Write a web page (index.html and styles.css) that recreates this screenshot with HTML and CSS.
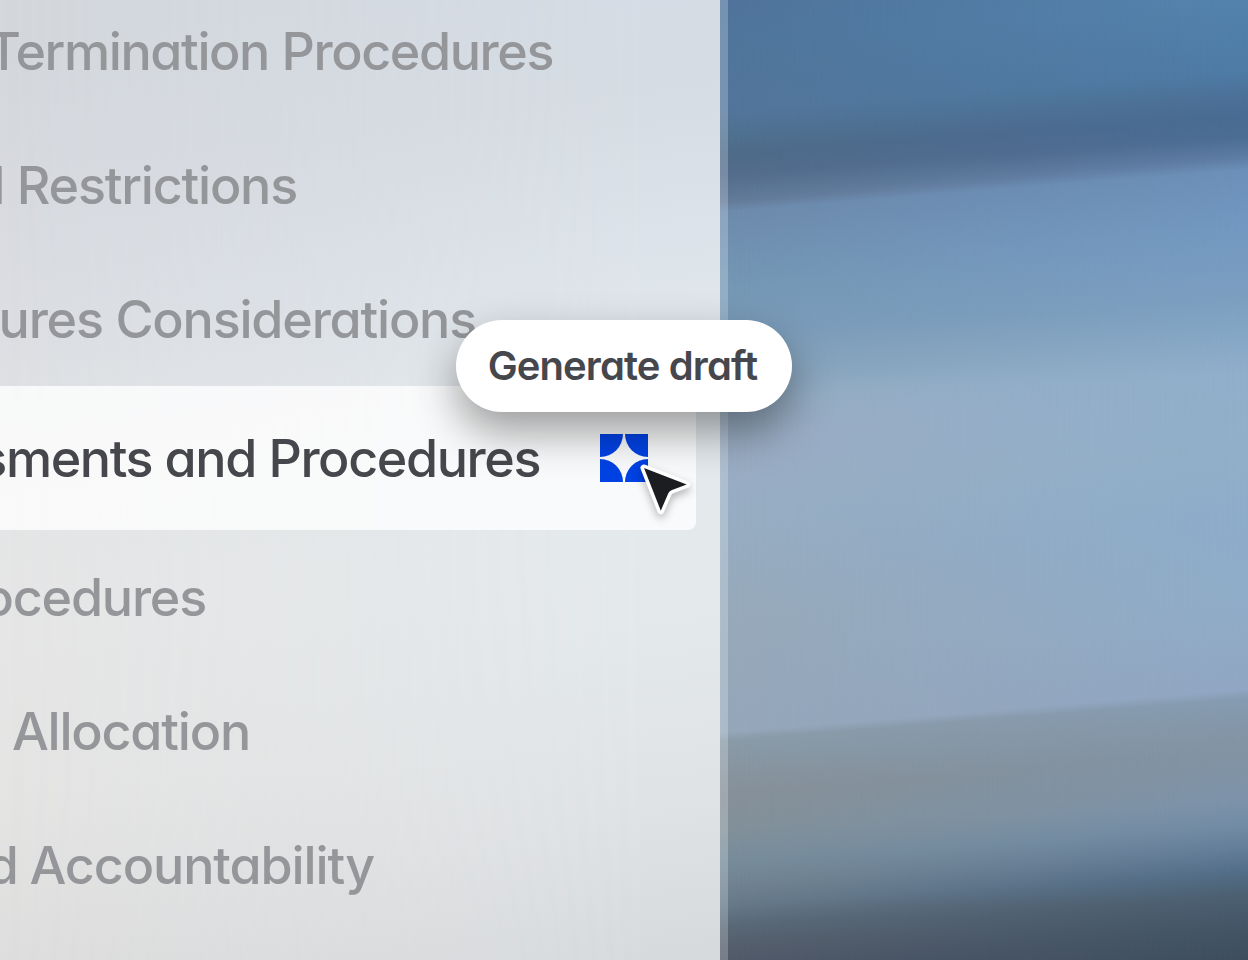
FILE: index.html
```html
<!DOCTYPE html>
<html lang="en">
<head>
    <meta charset="UTF-8">
    <meta name="viewport" content="width=device-width, initial-scale=1.0">
    <title>Generate draft</title>
    <link rel="stylesheet" href="styles.css">
</head>
<body>

    <div class="scene">
        <div class="backdrop">
            <div class="sky"></div>
            <div class="sky sky-right"></div>
        </div>

        <div class="panel">
            <ul class="list">
                <li class="row row-termination"><span>Termination Procedures</span></li>
                <li class="row row-restrictions"><span>d Restrictions</span></li>
                <li class="row row-considerations"><span>ures Considerations</span></li>
                <li class="row row-active">
                    <span>sments and Procedures</span>
                    <svg class="spark" viewBox="0 0 48 48">
                        <path d="M0 0H23A23 23 0 0 1 0 23Z"/>
                        <path d="M48 0V23A23 23 0 0 1 25 0Z"/>
                        <path d="M0 48V25A23 23 0 0 1 23 48Z"/>
                        <path d="M48 48H25A23 23 0 0 1 48 25Z"/>
                    </svg>
                    <div class="tooltip">Generate draft</div>
                    <svg class="cursor" viewBox="0 0 60 60">
                        <path d="M6 6L48.7 22.4L34 28Q31.500 29 30.300 31.300L22.800 48.700Z" fill="#fff" stroke="#fff" stroke-width="7" stroke-linejoin="round"/>
                        <path d="M6 6L48.7 22.4L34 28Q31.500 29 30.300 31.300L22.800 48.700Z" fill="#1c1d20"/>
                    </svg>
                </li>
                <li class="row row-procedures"><span>ocedures</span></li>
                <li class="row row-allocation"><span>Allocation</span></li>
                <li class="row row-accountability"><span>d Accountability</span></li>
            </ul>
        </div>
    </div>

</body>
</html>
```
FILE: styles.css
```css
*,
::after,
::before {
    margin: 0;
    padding: 0;
    box-sizing: border-box;
}

body {
    font-family: Inter, "Liberation Sans", sans-serif;
    font-feature-settings: "cv11";
    overflow: hidden;
}

.scene {
    position: relative;
    width: 1248px;
    height: 960px;
    overflow: hidden;
}

.backdrop {
    position: absolute;
    inset: 0 0 0 720px;
    overflow: hidden;
}

/* the photo is built from two tilted gradients, the second fades in to the right */
.sky {
    position: absolute;
    top: 0;
    left: 0;
    width: 528px;
    height: 1010px;
    transform: skewY(-4.5deg);
    transform-origin: 0 0;
    background: linear-gradient(#50739b 0, #50759c 40px, #53759b 112px, #4f7190 135px, #4f6b89 155px, #546c8c 175px, #5f7896 196px, #657c9b 203px, #6d8bac 212px, #7090b0 242px, #7598b5 290px, #7b9cb9 335px, #8aa5bc 380px, #96adc2 402px, #9badc4 440px, #97adc2 520px, #97a9ba 620px, #95a7ba 733px, #8a9ba8 741px, #869099 795px, #829099 830px, #778c9b 862px, #708290 887px, #667989 906px, #5a6876 927px, #555e6c 948px, #4d5666 975px, #4d5666 1010px);
}

.sky-right {
    background: linear-gradient(#5383ad 0, #5383ad 41px, #4d7ba5 113px, #4c7098 138px, #486b93 158px, #4c6d93 178px, #5d7ca4 198px, #6b8fb8 211px, #7398c1 271px, #7c9fc0 341px, #86a8c6 381px, #90aecb 415px, #91afc8 491px, #8daccb 561px, #90acc8 641px, #90a6c2 731px, #859bb1 740px, #8293a3 791px, #7d93aa 840px, #728ca5 866px, #637d98 890px, #536e88 912px, #4b6072 936px, #445667 965px, #3d4c5c 1005px);
    -webkit-mask-image: linear-gradient(to right, transparent, #000);
    mask-image: linear-gradient(to right, transparent, #000);
}

.panel {
    position: relative;
    width: 728px;
    height: 960px;
    padding-right: 24px;
    border-right: 8px solid rgba(255, 255, 255, 0.22);
    background: linear-gradient(174deg, #d4d7db 40px, #d8dadf 190px, #dcdee2 330px, #e4e5e6 480px, #e6e6e6 620px, #e4e4e3 800px, #dcdcdc 1000px) padding-box;
}

.panel::before {
    content: "";
    position: absolute;
    inset: 0;
    background: linear-gradient(172deg, #d4dce6 50px, #d5dce3 180px, #dce3ea 330px, #e1e7ec 450px, #e4e9ec 600px, #e3e8eb 720px, #e0e3e6 880px, #d7dadd 1040px);
    -webkit-mask-image: linear-gradient(to right, transparent, #000 90%);
    mask-image: linear-gradient(to right, transparent, #000 90%);
}

.list {
    position: relative;
    list-style: none;
    transform: translateY(-16px);
}

.row {
    display: flex;
    align-items: center;
    justify-content: flex-end;
    height: 134px;
    color: #949699;
    font-size: 52px;
    font-weight: 500;
    letter-spacing: -1.2px;
    white-space: nowrap;
}

.row-termination {
    width: 553px;
    letter-spacing: -1.4px;
}

.row-restrictions {
    width: 297px;
}

.row-considerations {
    width: 476px;
}

.row-procedures {
    width: 206px;
}

.row-allocation {
    width: 250px;
}

.row-accountability {
    width: 374px;
    letter-spacing: -1.1px;
    word-spacing: -1px;
}

.row-active {
    position: relative;
    height: 144px;
    padding-right: 48px;
    border-radius: 0 8px 8px 0;
    background: rgba(255, 255, 255, 0.78);
    color: #46474c;
    letter-spacing: -1.4px;
}

.spark {
    flex-shrink: 0;
    width: 48px;
    height: 48px;
    margin-left: 60px;
    fill: #0042e4;
}

.tooltip {
    position: absolute;
    top: -66px;
    left: 456px;
    width: 336px;
    height: 92px;
    border-radius: 46px;
    background: #fff;
    box-shadow: 0 20px 44px rgba(0, 0, 0, 0.38);
    color: #46474c;
    font-size: 40px;
    font-weight: 600;
    line-height: 92px;
    letter-spacing: -0.9px;
    padding-right: 3px;
    text-align: center;
}

.cursor {
    position: absolute;
    top: 76px;
    left: 638px;
    width: 60px;
    height: 60px;
    overflow: visible;
    filter: drop-shadow(0 4px 4px rgba(0, 0, 0, 0.28));
}
```
